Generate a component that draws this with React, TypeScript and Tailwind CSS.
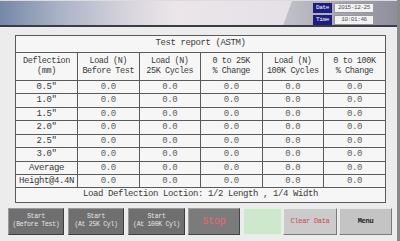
const rows = ['0.5"', '1.0"', '1.5"', '2.0"', '2.5"', '3.0"', "Average", "Height@4.4N"];
const rowH = ["h-[13px]", "h-[14px]", "h-[13px]", "h-[14px]", "h-[13px]", "h-[14px]", "h-[13px]", "h-[13px]"];

const headers: [string, string][] = [
  ["Deflection", "(mm)"],
  ["Load (N)", "Before Test"],
  ["Load (N)", "25K Cycles"],
  ["0 to 25K", "% Change"],
  ["Load (N)", "100K Cycles"],
  ["0 to 100K", "% Change"],
];

function StartButton({ line2, className }: { line2: string; className: string }) {
  return (
    <button
      className={`h-[27px] bg-[#6f6f6f] border border-t-[#9a9a9a] border-l-[#9a9a9a] border-r-[#3c3c3c] border-b-[#3c3c3c] flex flex-col items-center justify-center text-[6.5px] leading-[8px] tracking-[-0.3px] text-[#e6e6e6] ${className}`}
    >
      <span>Start</span>
      <span>{line2}</span>
    </button>
  );
}

export default function App() {
  return (
    <div className="w-[400px] h-[241px] bg-[#ececec] overflow-hidden flex flex-col font-['Liberation_Mono',monospace] border-r-[3px] border-r-[#8a8a8a]">
      {/* header */}
      <div className="h-[27px] shrink-0 flex border-t border-t-[#dcdcdc] border-b-2 border-b-[#3c3c44] bg-[linear-gradient(90deg,#b6b6c2_0%,#c4c4ce_70%,#8e8e9c_100%)]">
        <div className="w-[292px] bg-[linear-gradient(90deg,#7587a8_0%,#a9b2c6_20%,#d9d6de_45%,#ece6ea_60%,#e4e0e6_100%)] [clip-path:polygon(0_0,100%_0,97%_100%,0_100%)]" />
        <div className="flex flex-col gap-[2px] pt-[2px] ml-[21px]">
          <div className="flex gap-[2px] h-[10px]">
            <div className="w-[19px] bg-[#1d1d7e] text-white text-[6px] leading-[10px] text-center tracking-[-0.4px]">Date</div>
            <div className="w-[40px] bg-[#f2f2f2] border border-[#9a9a9a] text-[#555] text-[6px] leading-[8px] text-center tracking-[-0.4px]">2015-12-25</div>
          </div>
          <div className="flex gap-[2px] h-[10px]">
            <div className="w-[19px] bg-[#1d1d7e] text-white text-[6px] leading-[10px] text-center tracking-[-0.4px]">Time</div>
            <div className="w-[40px] bg-[#f2f2f2] border border-[#9a9a9a] text-[#555] text-[6px] leading-[8px] text-center tracking-[-0.4px]">10:01:46</div>
          </div>
        </div>
      </div>

      {/* report table */}
      <div className="ml-[15px] mt-[8px] w-[371px] border border-[#5a5a5a] bg-[#f6f6f6] text-[#3a3a3a] text-[9px] tracking-[-0.4px]">
        <div className="h-[17px] flex items-center justify-center border-b border-[#5a5a5a]">Test report (ASTM)</div>
        <table className="w-full table-fixed border-collapse">
          <thead>
            <tr className="h-[27px]">
              {headers.map(([a, b], i) => (
                <th
                  key={i}
                  className={`font-normal leading-[10px] text-[8.5px] border-b border-[#5a5a5a] ${i < 5 ? "border-r" : ""}`}
                >
                  <div>{a}</div>
                  <div>{b}</div>
                </th>
              ))}
            </tr>
          </thead>
          <tbody>
            {rows.map((r, ri) => (
              <tr key={r} className={rowH[ri]}>
                <td className="text-center p-0 leading-[12px] border-b border-r border-[#5a5a5a]">{r}</td>
                {[0, 1, 2, 3, 4].map((c) => (
                  <td
                    key={c}
                    className={`text-center p-0 leading-[12px] text-[#5e5e5e] border-b border-[#5a5a5a] ${c < 4 ? "border-r" : ""}`}
                  >
                    0.0
                  </td>
                ))}
              </tr>
            ))}
          </tbody>
        </table>
        <div className="h-[14px] flex items-center justify-center">Load Deflection Loction: 1/2 Length , 1/4 Width</div>
      </div>

      {/* buttons */}
      <div className="flex mt-[5px] ml-[8px]">
        <StartButton line2="(Before Test)" className="w-[56px]" />
        <StartButton line2="(At 25K Cyl)" className="w-[56px] ml-[4px]" />
        <StartButton line2="(At 100K Cyl)" className="w-[57px] ml-[4px]" />
        <button className="w-[52px] h-[27px] ml-[3px] bg-[#7b7b7b] border border-t-[#a0a0a0] border-l-[#a0a0a0] border-r-[#444] border-b-[#444] text-[#ec6a6a] text-[10px] tracking-[-0.3px]">
          Stop
        </button>
        <div className="w-[39px] h-[27px] ml-[3px] bg-[#cde8cd] border border-[#e2f2e2]" />
        <button className="w-[54px] h-[27px] ml-[1px] bg-[#cbcbcb] border border-t-[#ececec] border-l-[#ececec] border-r-[#7a7a7a] border-b-[#7a7a7a] text-[#d04a4a] text-[7px] tracking-[-0.3px]">
          Clear Data
        </button>
        <button className="w-[53px] h-[27px] ml-[2px] bg-[#c4c4c4] border border-t-[#e6e6e6] border-l-[#e6e6e6] border-r-[#7a7a7a] border-b-[#7a7a7a] text-[#1e1e1e] font-bold text-[7px] tracking-[-0.3px]">
          Menu
        </button>
      </div>
    </div>
  );
}
